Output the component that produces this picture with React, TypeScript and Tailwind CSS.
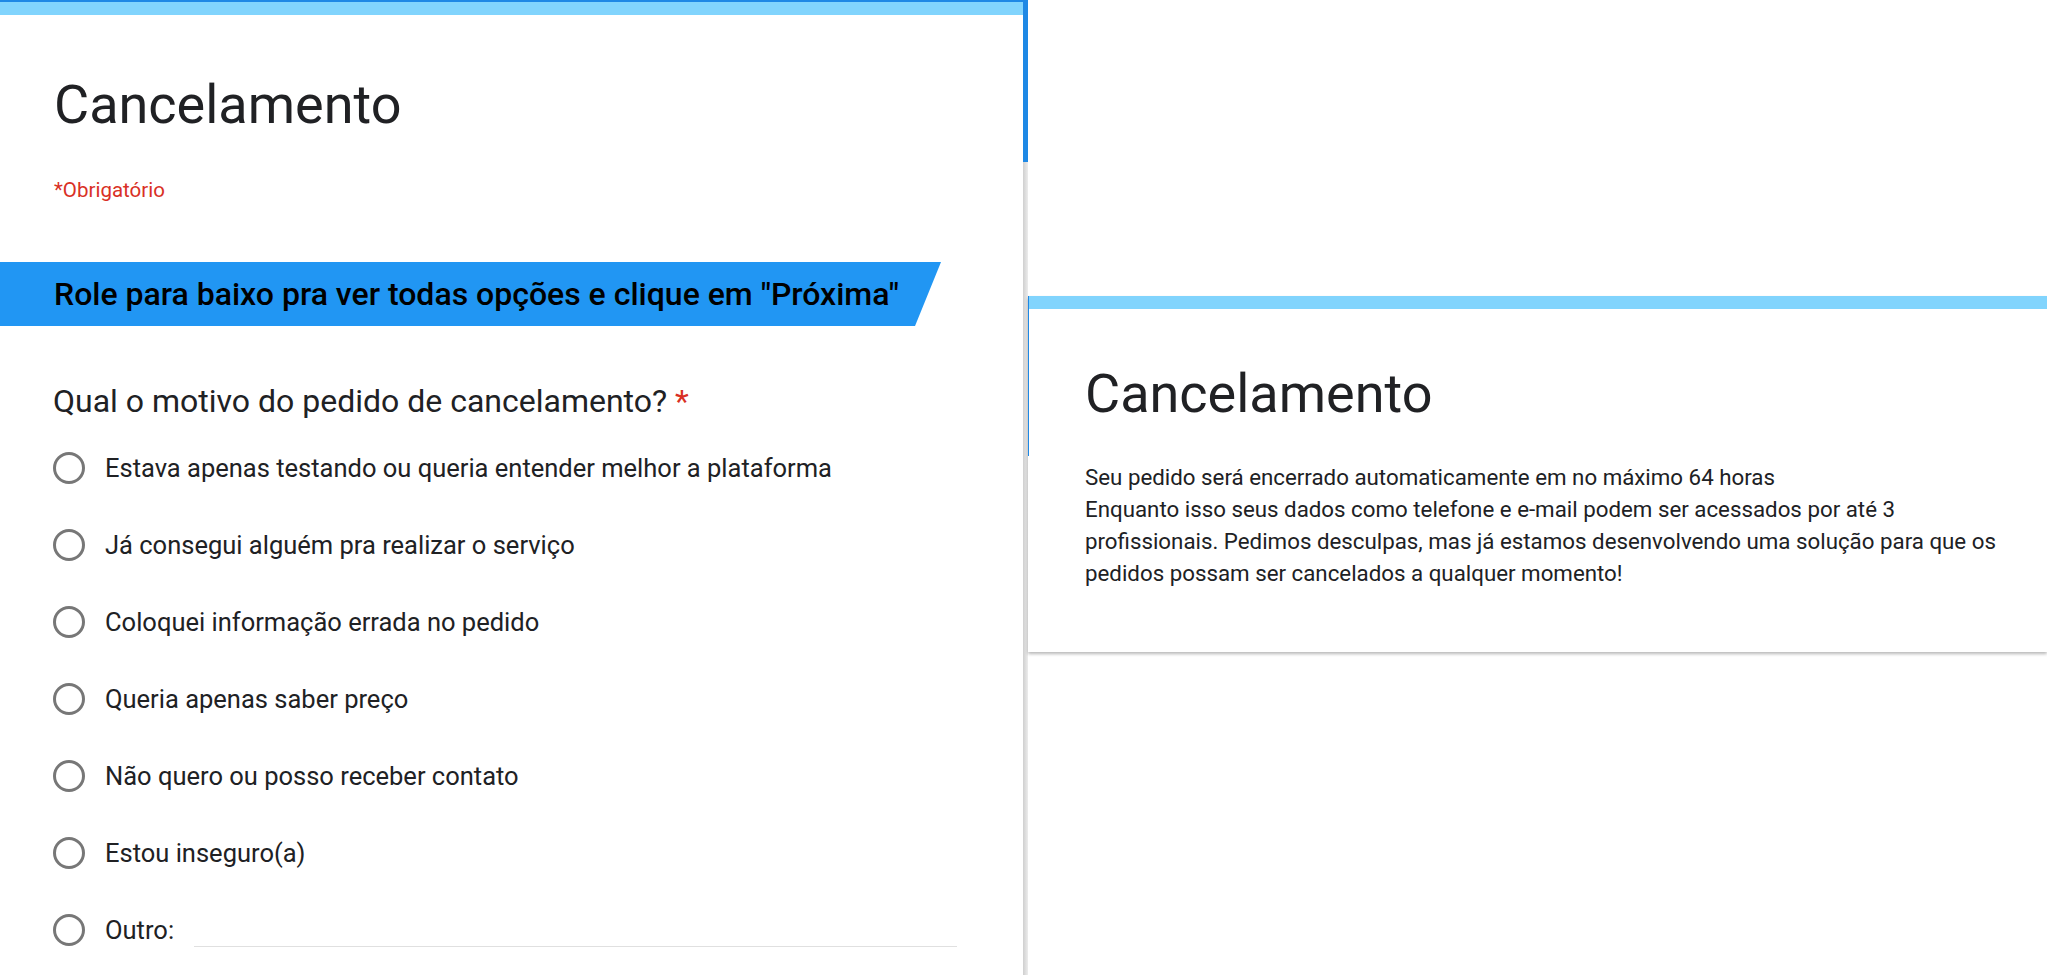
import React from "react";

const options = [
  "Estava apenas testando ou queria entender melhor a plataforma",
  "Já consegui alguém pra realizar o serviço",
  "Coloquei informação errada no pedido",
  "Queria apenas saber preço",
  "Não quero ou posso receber contato",
  "Estou inseguro(a)",
];

function Radio() {
  return <span className="w-[32px] h-[32px] shrink-0 rounded-full border-[3px] border-[#777777]" />;
}

export default function App() {
  return (
    <div className="flex w-[2047px] h-[975px] overflow-hidden bg-white text-[#202124] [font-family:Roboto,sans-serif]">
      {/* Left form page */}
      <div className="w-[1023px] shrink-0 flex flex-col border-t-2 border-[#1e88e5]">
        <div className="h-[13px] bg-[#81d4fd]" />
        <div className="px-[54px] pt-[58px]">
          <h1 className="text-[54px] leading-[64px] font-normal">Cancelamento</h1>
          <p className="mt-[41px] text-[20.5px] leading-[24px] text-[#d93025]">*Obrigatório</p>
        </div>

        <div className="mt-[60px] w-[941px] h-[64px] flex items-center pl-[54px] bg-[#2196f3] [clip-path:polygon(0_0,100%_0,calc(100%-26px)_100%,0_100%)]">
          <span className="text-[32px] leading-[40px] font-medium text-black whitespace-nowrap">
            Role para baixo pra ver todas opções e clique em "Próxima"
          </span>
        </div>

        <div className="px-[53px] pt-[55px]">
          <h2 className="text-[32px] leading-[40px] font-normal">
            Qual o motivo do pedido de cancelamento? <span className="text-[#d93025]">*</span>
          </h2>
          <div className="mt-[8px] flex flex-col">
            {options.map((o) => (
              <label key={o} className="h-[77px] flex items-center gap-[20px]">
                <Radio />
                <span className="text-[25.5px] leading-[32px]">{o}</span>
              </label>
            ))}
            <label className="h-[77px] flex items-center gap-[20px]">
              <Radio />
              <span className="text-[25.5px] leading-[32px]">Outro:</span>
              <span className="mt-[34px] w-[763px] border-b border-[#e0e0e0]" />
            </label>
          </div>
        </div>
      </div>

      {/* Scroll strip */}
      <div className="w-[5px] shrink-0 flex flex-col">
        <div className="h-[162px] bg-[#1e88e5]" />
        <div className="flex-1 bg-gradient-to-r from-[#cfcfcf] to-[#ececec]" />
      </div>

      {/* Right confirmation page */}
      <div className="flex-1 pt-[296px]">
        <div className="flex bg-white shadow-[0_2px_3px_rgba(0,0,0,0.28)]">
          <div className="w-px flex flex-col">
            <div className="h-[160px] bg-[#1e88e5]" />
          </div>
          <div className="flex-1 flex flex-col">
            <div className="h-[13px] bg-[#81d4fd]" />
            <div className="pl-[56px] pt-[53px] pb-[63px]">
              <h1 className="text-[54px] leading-[64px] font-normal">Cancelamento</h1>
              <p className="mt-[35px] w-[925px] text-[22.3px] leading-[32px]">
                Seu pedido será encerrado automaticamente em no máximo 64 horas
                <br />
                Enquanto isso seus dados como telefone e e-mail podem ser acessados por até 3 profissionais. Pedimos desculpas, mas já estamos desenvolvendo uma solução para que os pedidos possam ser cancelados a qualquer momento!
              </p>
            </div>
          </div>
        </div>
      </div>
    </div>
  );
}
